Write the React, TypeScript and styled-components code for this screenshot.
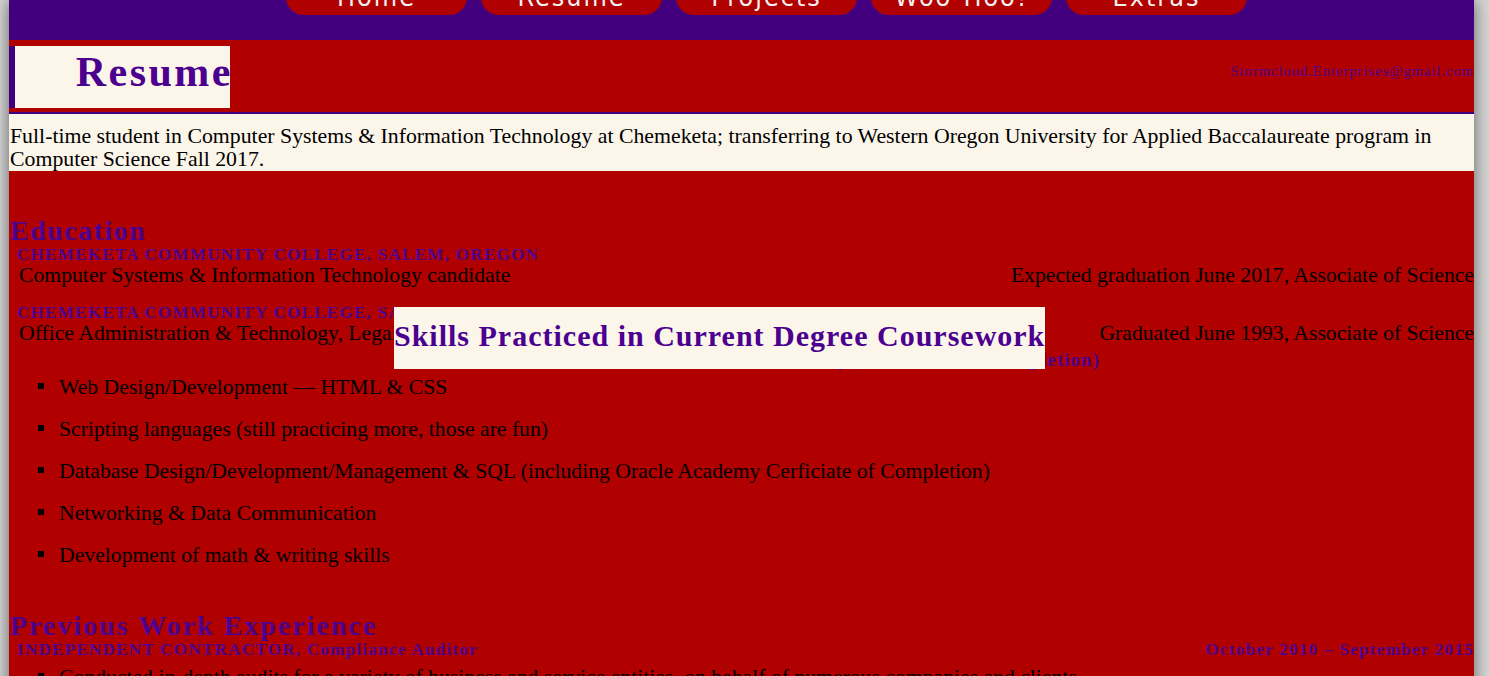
import React from "react";
import styled, { createGlobalStyle } from "styled-components";

const RED = "#b00000";
const PURPLE = "#42007e";
const INK = "#4b0090";
const CREAM = "#fcf5ea";

const GlobalStyle = createGlobalStyle`
  html, body {
    margin: 0;
    padding: 0;
    background: #d6d6d6;
    overflow: hidden;
  }
  body {
    font-family: "Liberation Serif", "Times New Roman", serif;
  }
`;

const Page = styled.div`
  position: relative;
  width: 1465px;
  margin-left: 9px;
  background: ${RED};
  box-shadow: 0 0 16px rgba(0, 0, 0, 0.55);
  min-height: 760px;
`;

const Nav = styled.nav`
  height: 40px;
  background: ${PURPLE};
  display: flex;
  gap: 14px;
  padding-left: 277px;
  overflow: hidden;
`;

const NavButton = styled.a`
  display: block;
  width: 181px;
  margin-top: -26px;
  padding: 10px 0 3px;
  height: 28px;
  line-height: 28px;
  background: ${RED};
  color: #f4f0f0;
  border-radius: 18px;
  text-align: center;
  font-family: "DejaVu Sans", Verdana, sans-serif;
  font-size: 24px;
  letter-spacing: 2px;
  text-decoration: none;
`;

const Header = styled.header`
  display: flex;
  justify-content: space-between;
  align-items: center;
  padding: 6px 0 4px;
  border-bottom: 2px solid ${PURPLE};
`;

const TitleBox = styled.h1`
  margin: 0;
  width: 215px;
  height: 62px;
  box-sizing: content-box;
  border-left: 6px solid ${PURPLE};
  background: ${CREAM};
  color: ${INK};
  text-align: right;
  font-size: 42px;
  line-height: 52px;
  letter-spacing: 2.5px;
  font-weight: bold;
  overflow: hidden;
`;

const TitleText = styled.span`
  margin-right: -3px;
`;

const Email = styled.a`
  color: ${INK};
  font-size: 14.5px;
  letter-spacing: 1px;
  text-decoration: none;
  margin-bottom: 12px;
`;

const Intro = styled.p`
  margin: 0;
  background: ${CREAM};
  color: #000;
  font-size: 21.8px;
  line-height: 23px;
  padding: 11px 0 0 1px;
  height: 46px;
`;

const Section = styled.section<{ $top: number }>`
  padding-left: 1px;
  margin-top: ${(p) => p.$top}px;
`;

const SectionTitle = styled.h2<{ $spacing: number }>`
  margin: 0;
  color: ${INK};
  font-size: 28px;
  line-height: 30px;
  letter-spacing: ${(p) => p.$spacing}px;
  font-weight: bold;
`;

const Entry = styled.div<{ $gap: number }>`
  margin-top: ${(p) => p.$gap}px;
`;

const EntryHead = styled.div`
  display: flex;
  justify-content: space-between;
  padding-left: 7px;
  color: ${INK};
  font-size: 17px;
  line-height: 18px;
  font-weight: bold;
  letter-spacing: 1.3px;
`;

const EntryLine = styled.div`
  display: flex;
  justify-content: space-between;
  padding-left: 9px;
  color: #000;
  font-size: 21.7px;
  line-height: 22px;
`;

const Note = styled.div`
  margin-top: 8px;
  width: 1090px;
  text-align: right;
  color: ${INK};
  font-size: 19px;
  line-height: 16px;
  font-weight: bold;
  letter-spacing: 1px;
`;

const SkillsTitle = styled.h2`
  position: absolute;
  left: 385px;
  top: 307px;
  margin: 0;
  width: 651px;
  height: 62px;
  background: ${CREAM};
  color: ${INK};
  font-size: 30px;
  line-height: 58px;
  letter-spacing: 1px;
  font-weight: bold;
  white-space: nowrap;
  overflow: hidden;
`;

const List = styled.ul<{ $top: number }>`
  margin: ${(p) => p.$top}px 0 0;
  padding-left: 49px;
  list-style: none;
`;

const Item = styled.li`
  display: flex;
  align-items: baseline;
  padding: 10px 0;
  font-size: 21.7px;
  line-height: 22px;
  color: #000;

  &::before {
    content: "";
    flex: none;
    width: 6px;
    height: 6px;
    background: #000;
    margin-left: -21px;
    margin-right: 15px;
    transform: translateY(-5px);
  }
`;

const skills = [
  "Web Design/Development — HTML & CSS",
  "Scripting languages (still practicing more, those are fun)",
  "Database Design/Development/Management & SQL (including Oracle Academy Cerficiate of Completion)",
  "Networking & Data Communication",
  "Development of math & writing skills",
];

export default function App() {
  return (
    <>
      <GlobalStyle />
      <Page>
        <Nav>
          {["Home", "Resume", "Projects", "Woo-Hoo!", "Extras"].map((n) => (
            <NavButton key={n} href="#">
              {n}
            </NavButton>
          ))}
        </Nav>
        <Header>
          <TitleBox>
            <TitleText>Resume</TitleText>
          </TitleBox>
          <Email href="#">Stormcloud.Enterprises@gmail.com</Email>
        </Header>
        <Intro>
          Full-time student in Computer Systems &amp; Information Technology at Chemeketa; transferring to Western
          Oregon University for Applied Baccalaureate program in Computer Science Fall 2017.
        </Intro>
        <Section $top={45}>
          <SectionTitle $spacing={1.5}>Education</SectionTitle>
          <Entry $gap={0}>
            <EntryHead>
              <span>CHEMEKETA COMMUNITY COLLEGE, SALEM, OREGON</span>
            </EntryHead>
            <EntryLine>
              <span>Computer Systems &amp; Information Technology candidate</span>
              <span>Expected graduation June 2017, Associate of Science</span>
            </EntryLine>
          </Entry>
          <Entry $gap={18}>
            <EntryHead>
              <span>CHEMEKETA COMMUNITY COLLEGE, SALEM, OREGON</span>
            </EntryHead>
            <EntryLine>
              <span>Office Administration &amp; Technology, Legal Option</span>
              <span>Graduated June 1993, Associate of Science</span>
            </EntryLine>
          </Entry>
          <Note>Oracle Academy (Certificate of Completion)</Note>
          <List $top={-2}>
            {skills.map((s) => (
              <Item key={s}>{s}</Item>
            ))}
          </List>
        </Section>
        <SkillsTitle>Skills Practiced in Current Degree Coursework</SkillsTitle>
        <Section $top={35}>
          <SectionTitle $spacing={2}>Previous Work Experience</SectionTitle>
          <Entry $gap={0}>
            <EntryHead>
              <span>INDEPENDENT CONTRACTOR, Compliance Auditor</span>
              <span>October 2010 – September 2015</span>
            </EntryHead>
          </Entry>
          <List $top={-3}>
            <Item>
              Conducted in-depth audits for a variety of business and service entities, on behalf of numerous
              companies and clients.
            </Item>
          </List>
        </Section>
      </Page>
    </>
  );
}
